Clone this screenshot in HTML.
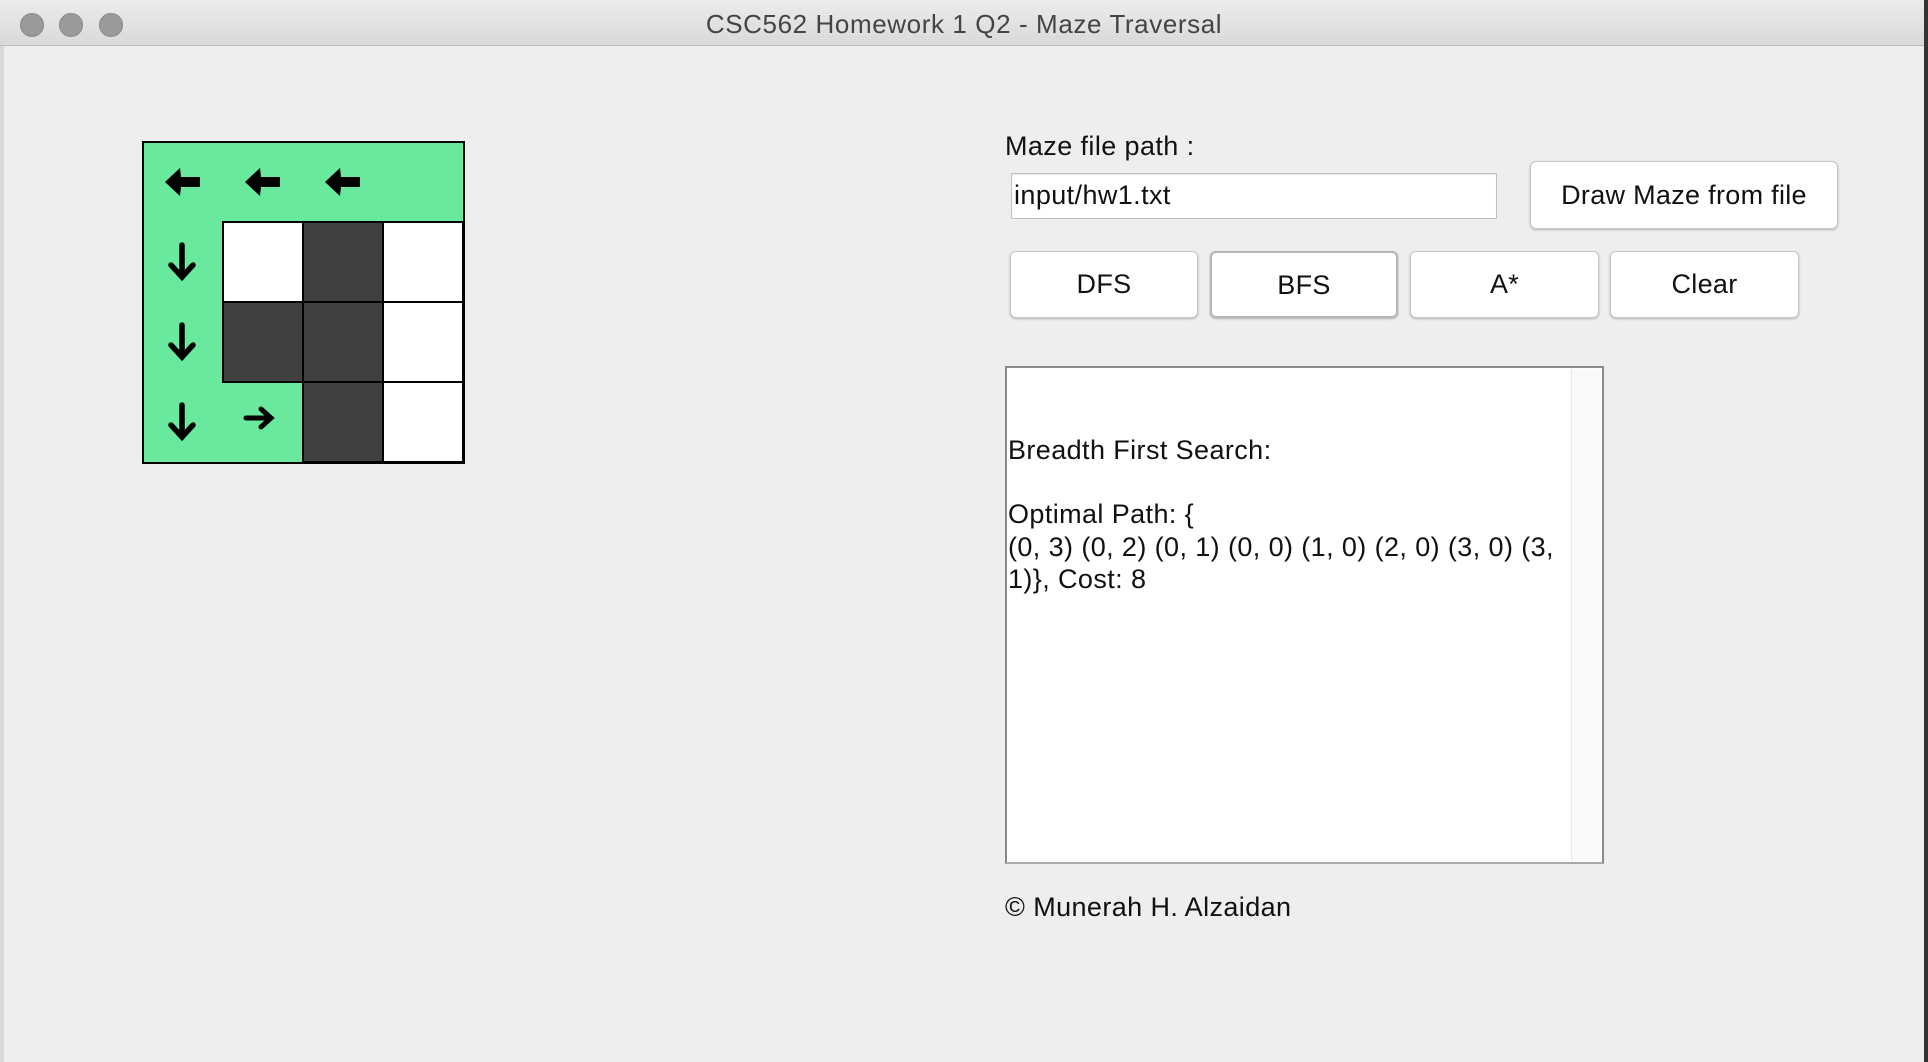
<!DOCTYPE html>
<html><head><meta charset="utf-8"><style>
*{margin:0;padding:0;box-sizing:border-box}
body{width:1928px;height:1062px;background:#eeeeee;position:relative;overflow:hidden;font-family:"Liberation Sans",sans-serif;color:#111}
.abs{position:absolute}
#title{left:0;top:0;width:1928px;height:46px;background:linear-gradient(#ececec,#d9d9d9);border-bottom:1px solid #bdbdbd;text-align:center;font-size:26px;letter-spacing:0.6px;line-height:48px;color:#444}
.dot{width:24px;height:24px;border-radius:50%;background:#9a9a9a;border:1px solid #888;top:13px}
.btn{position:absolute;background:#fff;border:1px solid #c8c8c8;border-radius:6px;box-shadow:0 1px 2px rgba(0,0,0,.25);font-size:27px;letter-spacing:0.3px;text-align:center}
.t{font-size:27px;letter-spacing:0.4px;position:absolute;white-space:nowrap}
</style></head><body>
<div id="title" class="abs">CSC562 Homework 1 Q2 - Maze Traversal</div>
<div class="abs dot" style="left:20px"></div>
<div class="abs dot" style="left:59px"></div>
<div class="abs dot" style="left:99px"></div>
<div class="abs" style="right:0;top:0;width:4px;height:1062px;background:#333"></div>
<div class="abs" style="left:0;top:46px;width:4px;height:1016px;background:#d8d8d8"></div>

<svg class="abs" style="left:142px;top:141px" width="324" height="323" viewBox="0 0 324 323">
<rect x="1" y="1" width="321" height="321" fill="#68e99d" stroke="#000" stroke-width="2"/>
<rect x="81" y="81" width="80" height="80" fill="#fff" stroke="#000" stroke-width="2"/>
<rect x="161" y="81" width="80" height="80" fill="#404040" stroke="#000" stroke-width="2"/>
<rect x="241" y="81" width="80" height="80" fill="#fff" stroke="#000" stroke-width="2"/>
<rect x="81" y="161" width="80" height="80" fill="#404040" stroke="#000" stroke-width="2"/>
<rect x="161" y="161" width="80" height="80" fill="#404040" stroke="#000" stroke-width="2"/>
<rect x="241" y="161" width="80" height="80" fill="#fff" stroke="#000" stroke-width="2"/>
<rect x="161" y="241" width="80" height="80" fill="#404040" stroke="#000" stroke-width="2"/>
<rect x="241" y="241" width="80" height="80" fill="#fff" stroke="#000" stroke-width="2"/>
<rect x="1" y="1" width="321" height="321" fill="none" stroke="#000" stroke-width="2"/>
<g fill="#000">
<path d="M23 41 L38 27 L39 36 L58 36 L58 46 L39 46 L38 55 Z"/>
<path d="M103 41 L118 27 L119 36 L138 36 L138 46 L119 46 L118 55 Z"/>
<path d="M183 41 L198 27 L199 36 L218 36 L218 46 L199 46 L198 55 Z"/>
</g>
<g fill="none" stroke="#000" stroke-width="5.5" stroke-linecap="round">
<path d="M40 104 V135 M29 124 L40 136 L51 124"/>
<path d="M40 184 V215 M29 204 L40 216 L51 204"/>
<path d="M40 264 V295 M29 284 L40 296 L51 284"/>
<path d="M104 277 H128 M119 268 L129 277 L119 286" stroke-width="5"/>
</g>
</svg>

<div class="t" style="left:1005px;top:131px">Maze file path :</div>
<div class="abs" style="left:1011px;top:173px;width:486px;height:46px;background:#fff;border:1px solid #c0c0c0;box-shadow:inset 0 1px 1px rgba(0,0,0,.1)"></div>
<div class="t" style="left:1014px;top:180px">input/hw1.txt</div>
<div class="btn" style="left:1530px;top:161px;width:308px;height:68px;line-height:66px">Draw Maze from file</div>
<div class="btn" style="left:1010px;top:251px;width:188px;height:67px;line-height:65px">DFS</div>
<div class="btn" style="left:1210px;top:251px;width:188px;height:67px;line-height:65px;border:2px solid #b5b5b5">BFS</div>
<div class="btn" style="left:1410px;top:251px;width:189px;height:67px;line-height:65px">A*</div>
<div class="btn" style="left:1610px;top:251px;width:189px;height:67px;line-height:65px">Clear</div>

<div class="abs" style="left:1005px;top:366px;width:599px;height:498px;background:#fff;border:2px solid #8a8a8a;border-bottom-color:#aaa"></div>
<div class="abs" style="left:1571px;top:369px;width:30px;height:492px;background:#fafafa;border-left:1px solid #e8e8e8"></div>
<div class="t" style="left:1008px;top:435px">Breadth First Search:</div>
<div class="t" style="left:1008px;top:499px">Optimal Path: {</div>
<div class="t" style="left:1008px;top:532px">(0, 3) (0, 2) (0, 1) (0, 0) (1, 0) (2, 0) (3, 0) (3,</div>
<div class="t" style="left:1008px;top:564px">1)}, Cost: 8</div>

<div class="t" style="left:1005px;top:892px">© Munerah H. Alzaidan</div>
</body></html>
